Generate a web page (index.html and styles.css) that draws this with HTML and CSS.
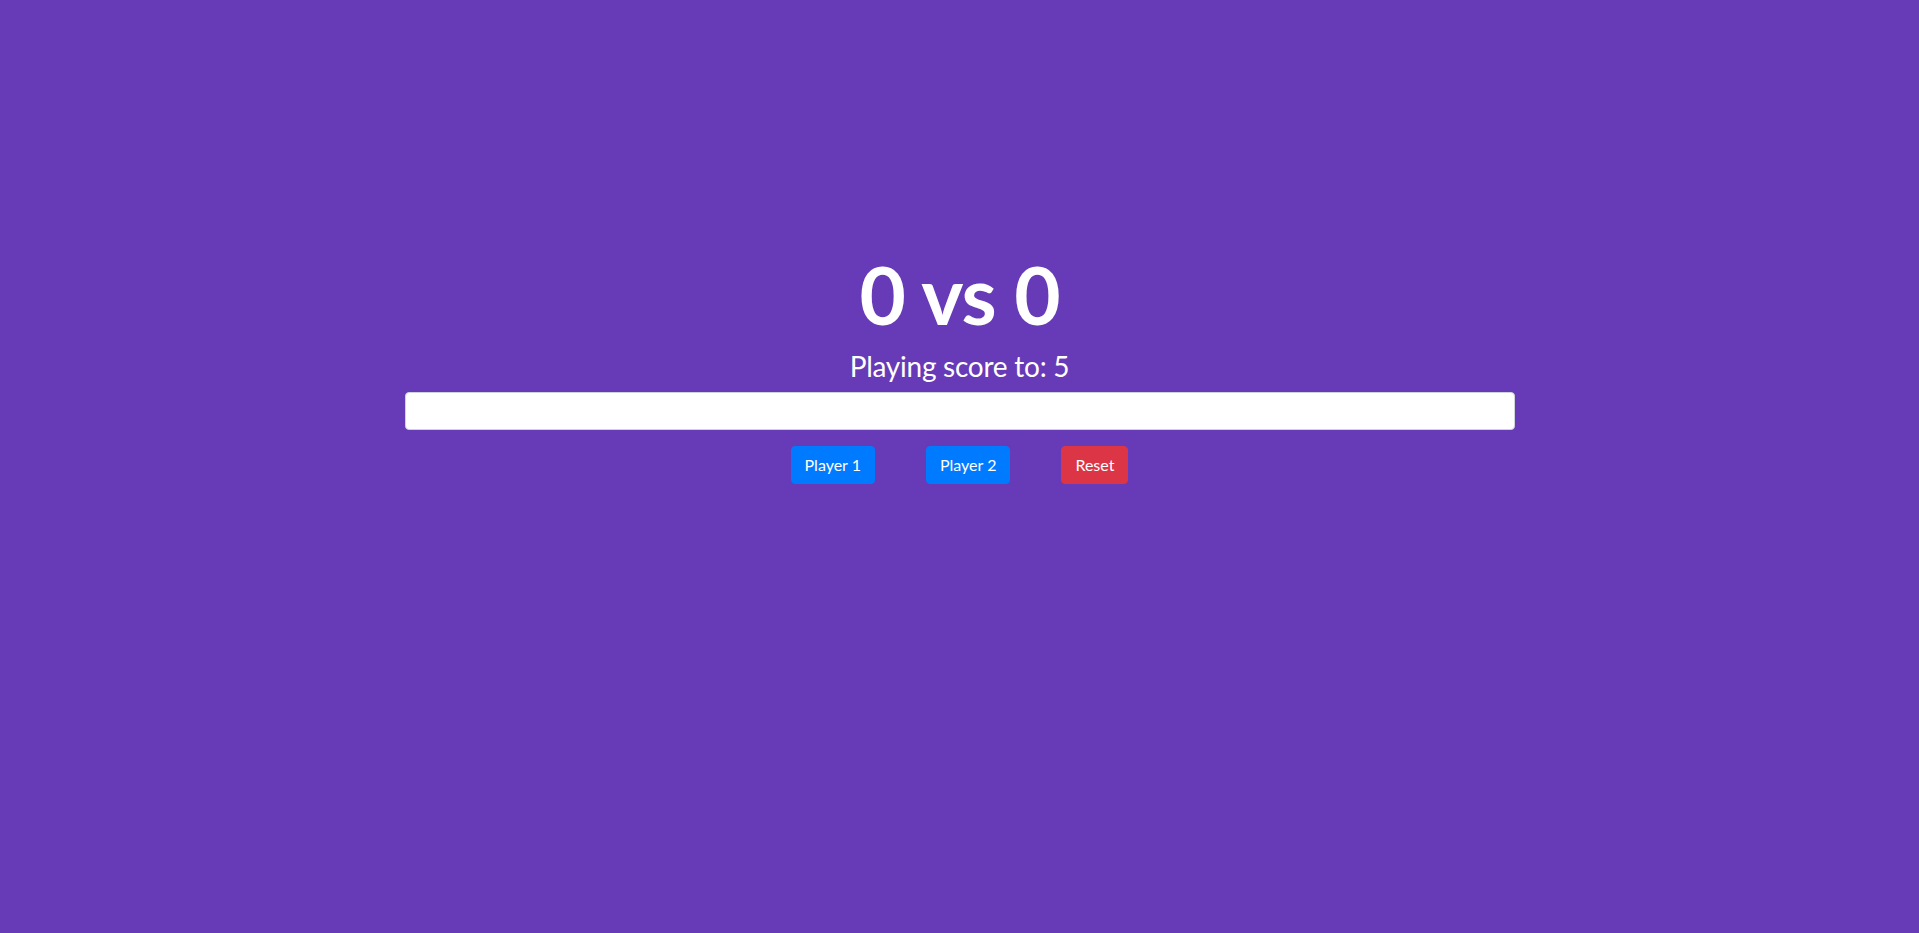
FILE: index.html
```html
<!DOCTYPE html>
<html lang="en">
<head>
<meta charset="utf-8">
<title>Score Keeper</title>
<link rel="stylesheet" href="styles.css">
</head>
<body>
<div class="container">
  <h1 class="score">0 vs 0</h1>
  <h3 class="target">Playing score to: 5</h3>
  <input class="form-control" type="number">
  <div class="actions">
    <button class="btn btn-primary">Player 1</button>
    <button class="btn btn-primary">Player 2</button>
    <button class="btn btn-danger">Reset</button>
  </div>
</div>
</body>
</html>
```

FILE: styles.css
```css
* { box-sizing: border-box; }
html, body { margin: 0; }
body {
  background: #673ab7;
  font-family: Lato, "Liberation Sans", sans-serif;
  font-size: 16px;
  line-height: 1.5;
  color: #fff;
  min-height: 933px;
}
.container {
  width: 1140px;
  margin: 0 auto;
  padding: 246px 15px 0;
  text-align: center;
}
.score {
  font-size: 80px;
  font-weight: 700;
  line-height: 1.2;
  letter-spacing: -1px;
  margin: 0 0 8px;
}
.target {
  font-size: 28px;
  font-weight: 400;
  line-height: 1.2;
  letter-spacing: -0.25px;
  margin: 0 0 8px;
}
.form-control {
  display: block;
  width: 100%;
  height: 38px;
  padding: 6px 12px;
  font-family: inherit;
  font-size: 16px;
  border: 1px solid #ced4da;
  border-radius: 4px;
  background: #fff;
  margin: 0 0 16px;
}
.actions {
  display: flex;
  justify-content: center;
  gap: 51px;
}
.btn {
  font-family: inherit;
  font-size: 16px;
  line-height: 1.5;
  padding: 6px 13px;
  border: 1px solid transparent;
  border-radius: 4px;
  color: #fff;
  cursor: pointer;
}
.btn-primary { background: #007bff; border-color: #007bff; }
.btn-danger { background: #dc3545; border-color: #dc3545; }
```
